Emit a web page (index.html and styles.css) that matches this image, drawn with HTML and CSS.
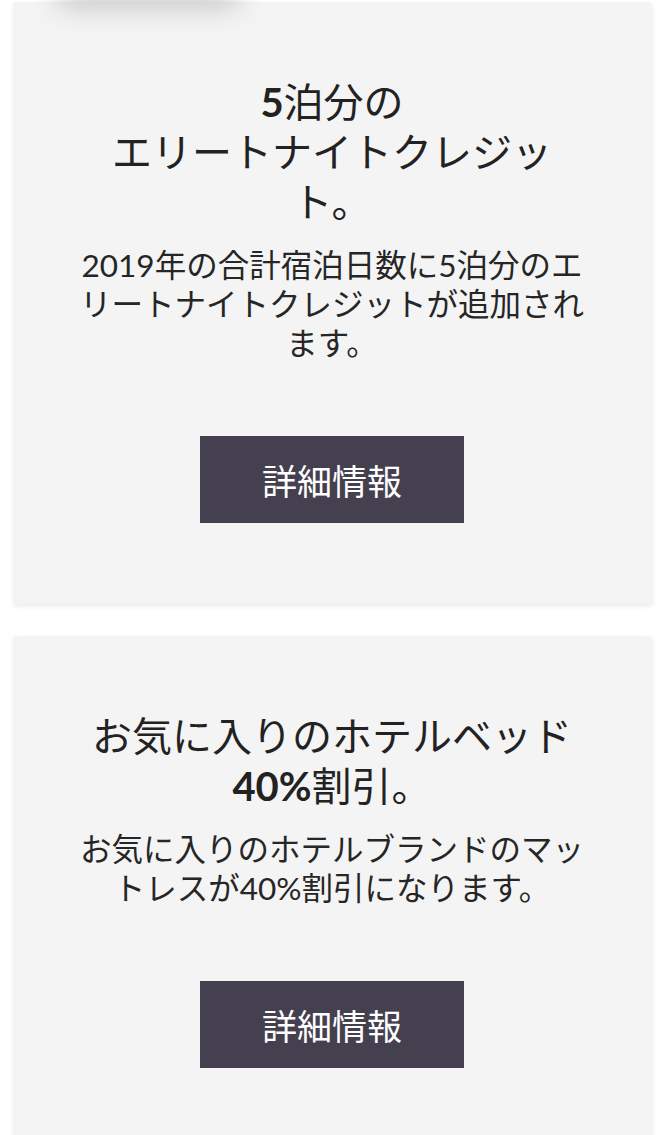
FILE: index.html
```html
<!DOCTYPE html>
<html lang="ja">
<head>
  <meta charset="UTF-8" />
  <meta name="viewport" content="width=device-width, initial-scale=1.0" />
  <title>特典</title>
  <link rel="stylesheet" href="styles.css">
</head>
<body>
  <div class="offers">
    <!-- shadow of the tab just above, scrolled out of view -->
    <div class="peek"></div>

    <div class="offer-card">
      <h2 class="offer-title"><b>5</b>泊分の<br>エリートナイトクレジット。</h2>
      <p class="offer-text">2019年の合計宿泊日数に5泊分のエリートナイトクレジットが追加されます。</p>
      <a class="more-button" href="#">詳細情報</a>
    </div>

    <div class="offer-card">
      <h2 class="offer-title">お気に入りのホテルベッド<b>40%</b>割引。</h2>
      <p class="offer-text">お気に入りのホテルブランドのマットレスが40%割引になります。</p>
      <a class="more-button" href="#">詳細情報</a>
    </div>
  </div>
</body>
</html>
```

FILE: styles.css
```css
* {
  margin: 0;
  padding: 0;
  box-sizing: border-box;
}

body {
  background: #ffffff;
  font-family: "Lato", "Noto Sans CJK JP", sans-serif;
  color: #222222;
  overflow: hidden;
}

.offers {
  position: relative;
  padding-top: 2px;
}

.peek {
  position: absolute;
  top: -40px;
  left: 58px;
  width: 180px;
  height: 40px;
  box-shadow: 0 6px 30px rgba(0, 0, 0, 0.2);
  z-index: 2;
}

.offer-card {
  margin: 0 8px 32px 13px;
  padding: 75px 63px 81px;
  background: #f4f4f4;
  box-shadow: 1px 2px 5px rgba(0, 0, 0, 0.09);
  display: flex;
  flex-direction: column;
  align-items: center;
  text-align: center;
}

.offer-title {
  font-size: 40px;
  line-height: 50px;
  font-weight: 400;
  margin-bottom: 19px;
}

.offer-title b {
  font-weight: 700;
}

.offer-text {
  font-size: 31.5px;
  line-height: 39px;
  font-weight: 400;
  color: #262626;
  margin-bottom: 73px;
}

.more-button {
  display: flex;
  align-items: center;
  justify-content: center;
  width: 264px;
  height: 87px;
  background: #45404f;
  color: #ffffff;
  font-size: 35px;
  text-decoration: none;
}
```
